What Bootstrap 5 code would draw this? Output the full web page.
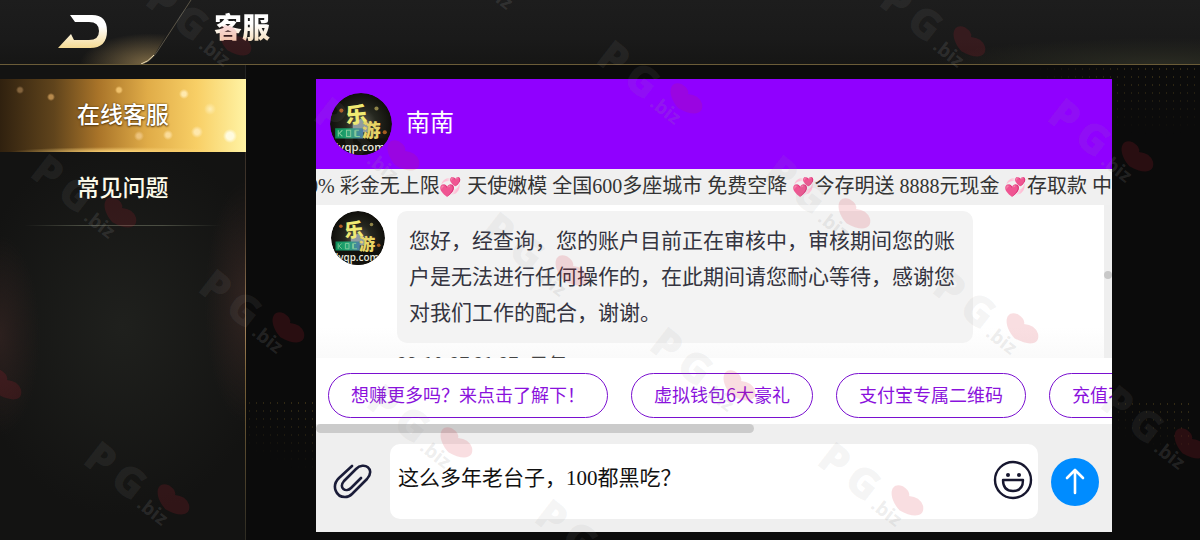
<!DOCTYPE html>
<html lang="zh-CN">
<head>
<meta charset="utf-8">
<meta name="viewport" content="width=device-width, initial-scale=1">
<title>客服</title>
<link rel="stylesheet" href="https://cdn.jsdelivr.net/npm/bootstrap@5.3.0/dist/css/bootstrap.min.css">
<style>
body { background: #0b0b0b; font-family: "Noto Sans CJK SC", sans-serif; }
.shell { min-height: 100vh; }
.topbar { height: 65px; border-bottom: 1px solid #6b5c38; background: radial-gradient(ellipse 230px 26px at 1160px 64px, #2a2b22, transparent), linear-gradient(#1d1d1d, #1a1a1a 60%, #161615); }
.corner { width: 200px; height: 64px; }
.page-title { font-size: 28px; line-height: 36px; font-weight: 900; background: linear-gradient(#fff 40%, #f3d3a6); -webkit-background-clip: text; background-clip: text; color: transparent; margin-left: 14px; padding-bottom: 4px; }
.side { width: 246px; border-right: 1px solid; border-image: linear-gradient(#222, #4a3a2c 35%, #a3825a 55%, #7a6238 65%, #2c2a22) 1;
  background: radial-gradient(ellipse 40px 120px at 100% 50%, #302320, transparent), radial-gradient(ellipse 40px 100px at 0 57%, #2c201e, transparent), radial-gradient(ellipse 150px 190px at 50% 55%, #1f201d, #131312); padding-top: 14px; }
.side a { height: 73px; font-size: 23px; font-weight: 500; color: #fdfbea; padding-bottom: 4px; }
.side a.on { color: #fff; text-shadow: 0 1px 2px #5b3a0c, 0 0 2px #5b3a0c; margin-right: -1px;
  background:
   radial-gradient(circle 7px at 230px 57px, #fffbe0 50%, transparent), radial-gradient(circle 5px at 184px 15px, #ffe9ae 40%, transparent),
   radial-gradient(circle 6px at 210px 30px, #ffeeb5, transparent), radial-gradient(circle 6px at 197px 53px, #ffe8ac 40%, transparent),
   radial-gradient(circle 5px at 168px 56px, #fbdc98 40%, transparent), radial-gradient(circle 5px at 139px 57px, #ecc27b 40%, transparent),
   radial-gradient(circle 4px at 119px 11px, #efc06b 50%, transparent), radial-gradient(circle 4px at 51px 18px, #b78a4d 50%, transparent),
   radial-gradient(circle 4px at 20px 11px, #83633c 50%, transparent),
   radial-gradient(ellipse 110px 5px at 120px 100%, #ffd77a, transparent),
   linear-gradient(90deg, #30210f, #60441c 22%, #a97429 40%, #e0ac48 60%, #f8cf66 80%, #fff3a4); }
.side hr { height: 1px; border: 0; opacity: 1; background: linear-gradient(90deg, transparent, #4b4e43 30%, #4b4e43 70%, transparent); }
.stage { position: relative; padding: 14px 88px 8px 70px; min-width: 0; }
.dots { position: absolute; background: radial-gradient(circle 1px, #6b5824, transparent) 0 0 / 7px 8px; }
.dots-tr { right: 0; top: 0; width: 170px; height: 70px; -webkit-mask-image: radial-gradient(ellipse at 75% 0, #000, transparent 70%); mask-image: radial-gradient(ellipse at 75% 0, #000, transparent 70%); }
.dots-br { right: 8px; bottom: 92px; width: 84px; height: 48px; -webkit-mask-image: linear-gradient(20deg, transparent 20%, #000); mask-image: linear-gradient(20deg, transparent 20%, #000); }
.dots-bl { left: 0; bottom: 55px; width: 74px; height: 86px; -webkit-mask-image: linear-gradient(20deg, transparent 30%, #000); mask-image: linear-gradient(20deg, transparent 30%, #000); }
.chat { position: relative; background: #efefef; min-width: 0; }
.chat-head { background: #9000ff; height: 90px; padding-left: 14px; gap: 14px; color: #fff; font-size: 24px; }
.chat-head span { padding-bottom: 6px; }
.ticker { height: 36px; line-height: 34px; font-size: 20px; color: #333; background: #f0f0f0; font-family: "Liberation Serif", "Noto Sans CJK SC", "Noto Color Emoji", serif; white-space: nowrap; }
.ticker i { font-size: 18px; font-style: normal; }
.log { background: linear-gradient(#fff 80%, #fafafa); padding: 6px 0 0 15px; height: 153px; }
.bubble { background: #f3f3f3; border-radius: 10px; padding: 10px 12px 14px; font-size: 21px; line-height: 36px; color: #343440; width: 576px; height: 132px; }
.stamp { font-size: 18px; line-height: 24px; height: 15px; color: #444; padding-top: 8px; overflow: hidden; white-space: pre; }
.track { width: 8px; background: #efefef; padding-top: 66px; }
.track span { width: 8px; height: 8px; border-radius: 4px; background: #c8c8c8; }
.quick { background: #fff; padding: 15px 12px 6px; gap: 23px; height: 66px; }
.quick button { height: 45px; border: 1px solid #7a10d0; border-radius: 23px; background: #fff; color: #8a12dc; font-size: 18px; padding: 0 22px 2px; white-space: nowrap; }
.bar { height: 9px; }
.bar span { width: 55%; border-radius: 5px; background: #cbcbcb; }
.compose { height: 99px; padding: 11px 13px 13px 17px; }
.field { background: #fff; border-radius: 10px; padding: 0 5px 4px 8px; margin: 0 13px 0 17px; }
.field input { font: 21px "Liberation Serif", "Noto Sans CJK SC", serif; color: #111; min-width: 0; outline: 0; padding: 0 0 8px; }
.bare { background: none; border: 0; padding: 0; line-height: 0; }
.send { width: 48px; height: 48px; background: #008cff; }
.marks { position: absolute; left: 0; top: 0; pointer-events: none; }
.defs { position: absolute; }
.ff { font-family: "Noto Sans CJK SC", sans-serif; }
</style>
<script src="https://cdn.jsdelivr.net/npm/bootstrap@5.3.0/dist/js/bootstrap.bundle.min.js"></script>
</head>
<body class="overflow-hidden">
<svg class="defs" width="0" height="0" aria-hidden="true">
  <defs>
    <linearGradient id="gold" x1="0" y1="0" x2="0" y2="1"><stop offset=".35" stop-color="#fff"/><stop offset="1" stop-color="#f5da93"/></linearGradient>
    <radialGradient id="glow" cx="150" cy="64" r="70" gradientTransform="translate(0 36) scale(1 .44)" gradientUnits="userSpaceOnUse"><stop offset="0" stop-color="#a98d59" stop-opacity=".7"/><stop offset="1" stop-color="#a98d59" stop-opacity="0"/></radialGradient>
    <radialGradient id="coin"><stop offset="0" stop-color="#65645a"/><stop offset=".5" stop-color="#25271f"/><stop offset="1" stop-color="#100f0b"/></radialGradient>
    <linearGradient id="jade"><stop offset="0" stop-color="#0a8a55"/><stop offset=".5" stop-color="#25a875"/><stop offset="1" stop-color="#507da8"/></linearGradient>
    <clipPath id="disc"><circle cx="30" cy="30" r="30"/></clipPath>
  </defs>
  <symbol id="face" viewBox="0 0 60 60">
    <g clip-path="url(#disc)">
      <circle cx="30" cy="30" r="30" fill="url(#coin)"/>
      <path d="M0 44h60v16H0z" fill="#11110c"/>
      <circle cx="11" cy="17" r="2" fill="#b35c20"/><circle cx="45" cy="15" r="2" fill="#8f8448"/><circle cx="53" cy="38" r="2" fill="#a35b20"/>
      <path d="M22 29l8-4 7 4v9H22z" fill="#8f9da0"/>
      <path d="M5 34h27v10H5z" fill="url(#jade)"/>
      <path d="M8 36v6M12 36l-3 3 3 3M16 36v6h4v-6zM24 36v6M28 36h-3v6h4" fill="none" stroke="#83cd9c"/>
      <text class="ff" x="15" y="29" font-size="21" font-weight="900" fill="#f0eb72" transform="rotate(-5 25 22)">乐</text>
      <text class="ff" x="31" y="43" font-size="18" font-weight="900" fill="#e8d565">游</text>
      <text x="5" y="56" font-family="Open Sans" font-size="11" font-weight="600" fill="#e9e9df">lvqp.com</text>
    </g>
  </symbol>
  <symbol id="mark" viewBox="0 0 120 50" overflow="visible">
    <g transform="rotate(38)" font-family="Open Sans">
      <text x="-91" y="26" font-weight="800" font-size="42" fill="#999" fill-opacity=".1">P</text>
      <text x="-57" y="26" font-weight="800" font-size="42" fill="#999" fill-opacity=".1">G</text>
      <path d="M4 11C-16 7-20-7-8-10q9-1 11 4 9-6 17-1c9 8-1 16-16 18z" fill="#d52035" fill-opacity=".15"/>
      <text x="-21" y="27" font-weight="700" font-size="19" fill="#999" fill-opacity=".18">.biz</text>
    </g>
  </symbol>
</svg>

<div class="shell d-flex flex-column">
  <header class="topbar d-flex align-items-center">
    <button class="bare" type="button" aria-label="返回">
      <svg class="corner" viewBox="0 0 200 64">
        <path d="M80 64V20H175L155 54Q148 64 140 64z" fill="url(#glow)"/>
        <path d="M191 0 157 52Q150 63 140 64" fill="none" stroke="#5b5547"/>
        <path d="M154 55Q148 62 141 64" fill="none" stroke="#f1dfb3"/>
        <path d="M70 15H92Q107 15 107 31Q107 48 90 48H58L71 34 74 40H89Q99 40 99 31Q99 22 89 22H75z" fill="url(#gold)"/>
      </svg>
    </button>
    <h1 class="page-title mb-2">客服</h1>
  </header>

  <div class="d-flex flex-grow-1">
    <nav class="side flex-shrink-0">
      <a class="on d-flex align-items-center justify-content-center text-decoration-none" href="#online">在线客服</a>
      <a class="d-flex align-items-center justify-content-center text-decoration-none" href="#faq">常见问题</a>
      <hr class="my-0 mx-4">
    </nav>

    <main class="stage flex-grow-1 d-flex">
      <div class="dots dots-tr"></div><div class="dots dots-br"></div><div class="dots dots-bl"></div>
      <section class="chat d-flex flex-column flex-grow-1">
        <div class="chat-head d-flex align-items-center">
          <svg width="62" height="62"><use href="#face"/></svg>
          <span>南南</span>
        </div>
        <div class="ticker d-flex justify-content-end overflow-hidden"><span>100% 彩金无上限<i>💞</i> 天使嫩模 全国600多座城市 免费空降 <i>💞</i>今存明送 8888元现金 <i>💞</i>存取款 中</span></div>
        <div class="d-flex">
          <div class="log d-flex flex-grow-1 overflow-hidden">
            <svg class="flex-shrink-0" width="54" height="54"><use href="#face"/></svg>
            <div class="ps-2 ms-1">
              <div class="bubble">您好，经查询，您的账户目前正在审核中，审核期间您的账户是无法进行任何操作的，在此期间请您耐心等待，感谢您对我们工作的配合，谢谢。</div>
              <div class="stamp">23-10-27 21:27   已复</div>
            </div>
          </div>
          <div class="track"><span class="d-block"></span></div>
        </div>
        <div class="quick d-flex overflow-hidden">
          <button type="button">想赚更多吗？来点击了解下！</button>
          <button type="button">虚拟钱包6大豪礼</button>
          <button type="button">支付宝专属二维码</button>
          <button type="button">充值不到账</button>
        </div>
        <div class="bar d-flex"><span></span></div>
        <form class="compose d-flex">
          <button class="bare" type="button" aria-label="附件">
            <svg width="40" height="40" viewBox="0 0 40 40" fill="none" stroke="#1a1c38" stroke-width="2.6" stroke-linecap="round" stroke-linejoin="round"><path d="M19 4 6 16C-2 24 3 35 12 35Q16 35 19 32L34 17C43 7 31-1 23 7L11 19C5 26 13 31 18 26L28 16"/></svg>
          </button>
          <div class="field d-flex flex-grow-1 align-items-center">
            <input class="border-0 flex-grow-1 bg-transparent" type="text" aria-label="消息" value="这么多年老台子，100都黑吃？">
            <button class="bare" type="button" aria-label="表情">
              <svg width="40" height="40" viewBox="0 0 40 40" fill="none" stroke="#17172f" stroke-width="2.4"><circle cx="20" cy="20" r="18"/><path d="M10 20H30Q30 31 20 31Q10 31 10 20z" stroke-linejoin="round"/><circle cx="15" cy="15" r="2" fill="#17172f" stroke="none"/><circle cx="26" cy="15" r="2" fill="#17172f" stroke="none"/></svg>
            </button>
          </div>
          <button class="bare send rounded-circle align-self-center" type="submit" aria-label="发送">
            <svg width="24" height="28" viewBox="0 0 24 28" fill="none" stroke="#fff" stroke-width="2.6" stroke-linecap="round" stroke-linejoin="round"><path d="M12 25V3M4 10 12 2 20 10"/></svg>
          </button>
        </form>
      </section>
    </main>
  </div>
</div>
<svg class="marks w-100 h-100" aria-hidden="true">
  <g id="tiles"></g>
</svg>
<script>
  const tiles = document.getElementById('tiles');
  for (let a = -1; a < 6; a++) for (let b = -2; b < 6; b++) {
    const u = document.createElementNS('http://www.w3.org/2000/svg', 'use');
    u.setAttribute('href', '#mark');
    u.setAttribute('width', 120);
    u.setAttribute('height', 50);
    u.setAttribute('x', 965 + a * 168 - b * 283);
    u.setAttribute('y', 40 + a * 115 + b * 57);
    tiles.append(u);
  }
</script>
</body>
</html>
